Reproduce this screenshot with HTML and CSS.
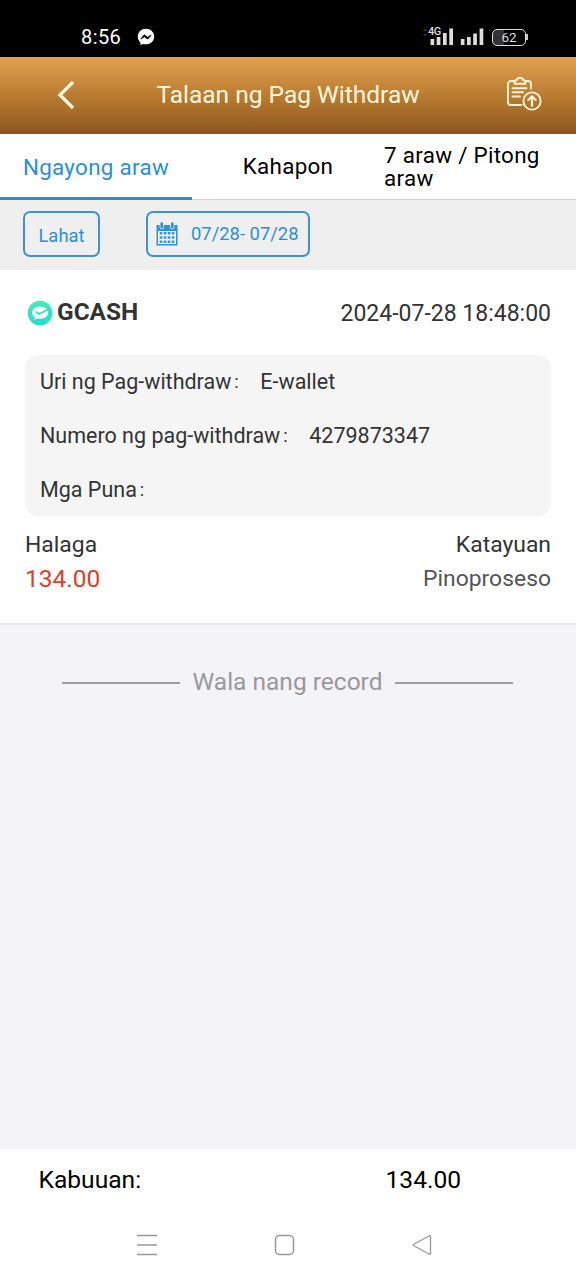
FILE: index.html
```html
<!DOCTYPE html>
<html lang="fil">
<head>
<meta charset="utf-8">
<title>Talaan ng Pag Withdraw</title>
<link rel="stylesheet" href="styles.css">
</head>
<body>
<div class="screen">
  <div class="status">
    <span class="clock">8:56</span>
    <svg class="messenger" width="18" height="18" viewBox="0 0 18 18"><path d="M9 .7C4.3.7.8 4 .8 8.5c0 2.4 1 4.5 2.600 5.900V17l2.600-1.100c1 .3 2 .4 3 .4 4.700 0 8.200-3.400 8.200-7.800S13.700.7 9 .7z" fill="#fff"/><path d="M3.800 11l3.400-4.200 3.300 2.500 3.700-2.300-3.400 4.100-3.300-2.400z" fill="#000" stroke="#000" stroke-width=".8" stroke-linejoin="round"/></svg>
    <div class="indicators">
      <div class="signal">
        <svg width="32" height="20" viewBox="0 0 32 20"><path d="M.7 4L3 1.500 5.300 4zM.7 7L3 9.500 5.300 7z" fill="#333"/><path d="M8.500 12h3.700v6H8.500zM14.700 10h3.700v8h-3.700zM21 6h3.700v12H21zM27.300 1.500H31V18h-3.700z" fill="#ddd"/></svg>
        <span class="network">4G</span>
      </div>
      <svg width="24" height="20" viewBox="0 0 24 20"><path d="M.8 12h3.700v6H.8zM7 10h3.700v8H7zM13.200 6.500h3.700V18h-3.700zM19.600 1.500h3.700V18h-3.700z" fill="#ddd"/></svg>
      <div class="battery">62</div>
    </div>
  </div>
  <header class="header">
    <svg class="back" width="20" height="32" viewBox="0 0 20 32"><path d="M18 3L5 16l13 13" fill="none" stroke="#fff7df" stroke-width="3.200"/></svg>
    <h1 class="title">Talaan ng Pag Withdraw</h1>
    <svg class="export" width="36" height="36" viewBox="0 0 36 36" fill="none" stroke="#fff3d4" stroke-width="1.900" stroke-linecap="round" stroke-linejoin="round"><path d="M9 4H5a3 3 0 0 0-3 3v18a3 3 0 0 0 3 3h10.500M19.500 4H22a3 3 0 0 1 3 3v4.500"/><path d="M8.500 6.800V4.700c0-1 .8-1.400 2-1.400C10.800 1.500 12 .9 14 .9s3.200.6 3.500 2.400c1.200 0 2 .4 2 1.400v2.100z"/><path d="M6.500 11.300h14M6.500 15.300h10.500M6.500 19.500h7.500"/><circle cx="26" cy="24" r="8.600"/><path d="M26 29v-9.500M22.300 23l3.700-3.700 3.700 3.700" stroke-width="2.200"/></svg>
  </header>
  <nav class="tabs">
    <div class="tab tab-active"><span>Ngayong araw</span></div>
    <div class="tab"><span>Kahapon</span></div>
    <div class="tab tab-week">7 araw / Pitong araw</div>
  </nav>
  <div class="filters">
    <div class="filter filter-all">Lahat</div>
    <div class="filter filter-date">
      <svg width="22" height="24" viewBox="0 0 22 24"><path d="M.5 3h21v20.500H.5z" fill="#3092d6"/><path d="M2 9h18v13H2z" fill="#f1f5f8"/><path d="M5.700 1.800v3.400M16.300 1.800v3.400" stroke="#efefef" stroke-width="4.200" stroke-linecap="round"/><path d="M5.700 1.500v3.700M16.300 1.500v3.700" stroke="#2c8fd3" stroke-width="2.600" stroke-linecap="round"/><path d="M3.700 11.300h14.800M3.700 15.500h14.800M3.700 19.700h14.800" stroke="#3d93cf" stroke-width="2.500" stroke-dasharray="2.700 1.300"/></svg>
      <span>07/28- 07/28</span>
    </div>
  </div>
  <main class="records">
    <section class="record">
      <div class="record-head">
        <svg width="26" height="26" viewBox="0 0 26 26"><defs><linearGradient id="mint" x2="0" y2="1"><stop stop-color="#44edba"/><stop offset="1" stop-color="#23dcc7"/></linearGradient></defs><circle cx="13" cy="13" r="12.300" fill="url(#mint)"/><path d="M13 6.500c-4.600 0-8 2.700-8 6.200 0 2 1.100 3.600 2.800 4.700L7.300 20l3-1.500c.9.200 1.700.3 2.700.3 4.600 0 8-2.700 8-6.100S17.600 6.500 13 6.500z" fill="#f4fffc"/><path d="M9.300 11.700l2.800 2.300 8.500-4.400" fill="none" stroke="#36dcb3" stroke-width="1.500"/></svg>
        <strong class="wallet">GCASH</strong>
        <time class="date">2024-07-28 18:48:00</time>
      </div>
      <div class="details">
        <div class="detail"><span>Uri ng Pag-withdraw</span><i class="colon">:</i><span>E-wallet</span></div>
        <div class="detail"><span>Numero ng pag-withdraw</span><i class="colon">:</i><span>4279873347</span></div>
        <div class="detail"><span>Mga Puna</span><i class="colon">:</i></div>
      </div>
      <div class="row row-labels"><span>Halaga</span><span>Katayuan</span></div>
      <div class="row row-values"><span class="amount">134.00</span><span class="state">Pinoproseso</span></div>
    </section>
    <div class="end"><span class="rule"></span><span>Wala nang record</span><span class="rule"></span></div>
  </main>
  <footer class="total"><span>Kabuuan:</span><span>134.00</span></footer>
  <div class="navbar">
    <svg width="22" height="24" viewBox="0 0 22 24"><path d="M1 2.500h20M1 12h20M1 21.500h20" stroke="#999" stroke-width="1.500"/></svg>
    <svg width="22" height="24" viewBox="0 0 22 24"><rect x="1.500" y="2.500" width="18" height="19" rx="4" fill="none" stroke="#999" stroke-width="1.500"/></svg>
    <svg width="22" height="24" viewBox="0 0 22 24"><path d="M18.500 2.800L2.800 11.200q-1.200.8 0 1.600l15.700 8.400q1 .4 1-.8V3.600q0-1.200-1-.8z" fill="none" stroke="#999" stroke-width="1.300"/></svg>
  </div>
</div>
</body>
</html>
```
FILE: styles.css
```css
* { box-sizing: border-box; }
body { margin: 0; font-family: Roboto, "Liberation Sans", sans-serif; color: #333; }
svg { display: block; flex: none; }
span, strong, time { white-space: nowrap; }
.screen { width: 576px; height: 1280px; display: flex; flex-direction: column; background: #fff; overflow: hidden; }
.status { height: 57px; flex: none; background: #000; color: #fff; display: flex; align-items: center; padding: 17px 48px 0 81px; }
.clock { font-size: 20px; letter-spacing: .4px; width: 56px; line-height: 24px; }
.indicators { margin-left: auto; display: flex; align-items: center; color: #ddd; }
.signal { position: relative; margin-right: 6px; }
.network { position: absolute; left: 6px; top: -1px; font-size: 11px; line-height: 11px; font-weight: 500; background: #000; letter-spacing: -.5px; }
.battery { position: relative; width: 34px; height: 17px; border: 1.500px solid #ddd; border-radius: 5px; background: linear-gradient(90deg, #333 35%, #000 35%); font-size: 13.5px; line-height: 15px; text-align: center; margin: 0 2px 0 8px; }
.battery::after { content: ""; position: absolute; right: -3px; top: 4px; width: 2px; height: 6px; background: #ccc; }
.header { height: 77px; flex: none; background: linear-gradient(#e0a14f, #ba7c32 50%, #8c561a); display: flex; align-items: center; padding: 0 34px 2px 55px; color: #fff7df; }
.title { margin: 0 auto; font-size: 24.5px; font-weight: 400; line-height: 28px; white-space: nowrap; padding-right: 5px; }
.tabs { height: 66px; flex: none; display: grid; grid-template-columns: 192px 192px 192px; color: #000; border-bottom: 1px solid #d2d2d2; }
.tab { display: flex; align-items: center; justify-content: center; font-size: 22.4px; line-height: 23px; letter-spacing: .3px; }
.tab-active { color: #2c8fd3; border-bottom: 3px solid #3288d2; margin-bottom: -1px; padding-top: 3px; }
.tab-week { display: block; padding-top: 10px; }
.filters { height: 70px; flex: none; background: #efefef; display: flex; gap: 46px; padding: 11px 23px; }
.filter { height: 46px; border: 2px solid #3d93cf; border-radius: 7px; color: #2c8fd3; font-size: 18.4px; display: flex; align-items: center; }
.filter-all { width: 77px; padding-top: 2px; justify-content: center; }
.filter-date { width: 164px; gap: 13px; padding: 0 0 1px 8px; }
.records { flex: 1; background: #f4f3f8; }
.record { height: 355px; background: #fff; border-bottom: 2px solid #e9e9ec; padding: 30px 25px 0; }
.record-head { display: flex; align-items: center; height: 26px; padding-left: 2px; }
.wallet { font-size: 24.4px; line-height: 28px; font-weight: 700; margin-left: 4px; padding-bottom: 2px; }
.date { margin-left: auto; font-size: 23px; }
.details { margin-top: 29px; height: 161px; background: #f5f5f5; border-radius: 13px; padding: 0 15px; }
.detail { height: 54px; font-size: 21.5px; line-height: 54px; display: flex; }
.colon { width: 29px; padding-left: 3px; font-style: normal; font-size: 18px; }
.row { display: flex; justify-content: space-between; font-size: 22.9px; line-height: 34px; }
.row-labels { margin-top: 12px; }
.amount { font-size: 24.5px; color: #dc3f2a; }
.state { color: #555; }
.end { display: flex; align-items: center; justify-content: center; gap: 12px; padding: 42px 1px 0 0; color: #999; font-size: 24.5px; line-height: 30px; }
.rule { width: 118px; height: 2px; background: #9e9da3; margin-top: 2px; }
.total { height: 61px; flex: none; display: grid; grid-template-columns: 347px 1fr; padding-left: 38.500px; font-size: 24.6px; line-height: 61px; color: #000; }
.navbar { height: 70px; flex: none; display: flex; justify-content: space-between; padding: 23px 143px 0 136px; }
```
